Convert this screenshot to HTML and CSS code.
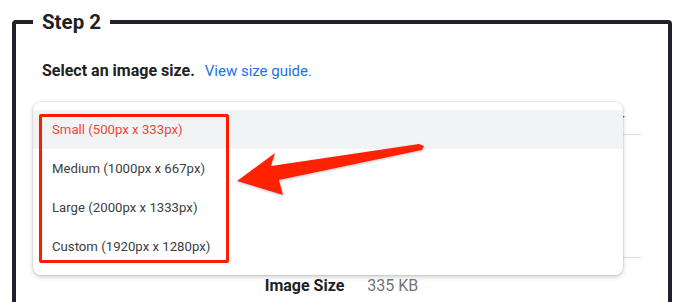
FILE: index.html
```html
<!DOCTYPE html>
<html lang="en">
<head>
  <meta charset="UTF-8" />
  <title>Step 2 - Image size</title>
  <link rel="stylesheet" href="styles.css">
</head>
<body>

  <fieldset class="step">
    <legend>Step 2</legend>

    <p class="prompt">Select an image size. <a href="#">View size guide.</a></p>

    <div class="field size-select">
      <span class="caret"></span>

      <div class="menu">
        <div class="option selected">Small (500px x 333px)</div>
        <div class="option">Medium (1000px x 667px)</div>
        <div class="option">Large (2000px x 1333px)</div>
        <div class="option">Custom (1920px x 1280px)</div>
        <div class="highlight-box"></div>
      </div>
    </div>

    <div class="field format-field"></div>

    <div class="size-row">
      <span class="size-label">Image Size</span>
      <span class="size-value">335 KB</span>
    </div>
  </fieldset>

  <svg class="pointer" width="680" height="302" viewBox="0 0 680 302">
    <defs>
      <filter id="soft" x="-10%" y="-10%" width="120%" height="140%">
        <feDropShadow dx="0" dy="1" stdDeviation="1" flood-color="#6b7d8c" flood-opacity="0.45"/>
      </filter>
    </defs>
    <polygon filter="url(#soft)" fill="#ff2200"
      points="237,181 275,153 271,166 419,144 424,146 422,150 279,180 283,195"/>
  </svg>

</body>
</html>
```

FILE: styles.css
```css
:root {
  --ink: #202124;
  --muted: #70757a;
  --menu-text: #3c4043;
  --link: #1a73e8;
  --frame: #1f2329;
  --mark: #ff1a00;
}

* {
  box-sizing: border-box;
}

body {
  margin: 0;
  background: #fff;
  font-family: Roboto, "Liberation Sans", sans-serif;
  color: var(--ink);
  position: relative;
  height: 302px;
  overflow: hidden;
}

.step {
  margin: 10px 8px 0 12px;
  padding: 0 27px 0 26px;
  border: 4px solid var(--frame);
  border-radius: 4px;
  height: 330px;
}

.step legend {
  margin-left: -9px;
  padding: 0 9px;
  font-size: 20.5px;
  line-height: 24px;
  font-weight: 700;
}

.prompt {
  margin: 27px 0 0;
  font-size: 16px;
  line-height: 20px;
  font-weight: 700;
}

.prompt a {
  margin-left: 6px;
  font-size: 15px;
  color: var(--link);
  font-weight: 400;
  text-decoration: none;
}

.field {
  border-bottom: 1px solid #dadce0;
}

.size-select {
  position: relative;
  height: 45px;
  margin-top: 9px;
  padding: 26px 16px 0 0;
  display: flex;
  justify-content: flex-end;
  align-items: flex-start;
}

.caret {
  width: 0;
  height: 0;
  border-left: 5px solid transparent;
  border-right: 5px solid transparent;
  border-top: 5px solid #5f6368;
}

.format-field {
  height: 44px;
  margin-top: 79px;
}

.menu {
  position: absolute;
  left: -9px;
  top: 12px;
  width: 590px;
  padding: 8px 0 9px;
  background: #fff;
  border-radius: 8px;
  box-shadow: 0 0 0 1px rgba(0, 0, 0, 0.06), 0 2px 5px rgba(0, 0, 0, 0.2);
  z-index: 2;
}

.option {
  height: 39px;
  padding-left: 19px;
  display: flex;
  align-items: center;
  font-size: 13.2px;
  color: var(--menu-text);
}

.option.selected {
  background: #f1f3f4;
  color: #f2453d;
}

.highlight-box {
  position: absolute;
  left: 6px;
  top: 12px;
  width: 190px;
  height: 149px;
  border: 3px solid var(--mark);
  border-radius: 2px;
}

.size-row {
  margin-top: 18px;
  display: flex;
  justify-content: center;
  gap: 23px;
  font-size: 16px;
  line-height: 20px;
}

.size-label {
  font-weight: 700;
}

.size-value {
  color: var(--muted);
}

.pointer {
  position: absolute;
  left: 0;
  top: 0;
  pointer-events: none;
  z-index: 3;
}
```
